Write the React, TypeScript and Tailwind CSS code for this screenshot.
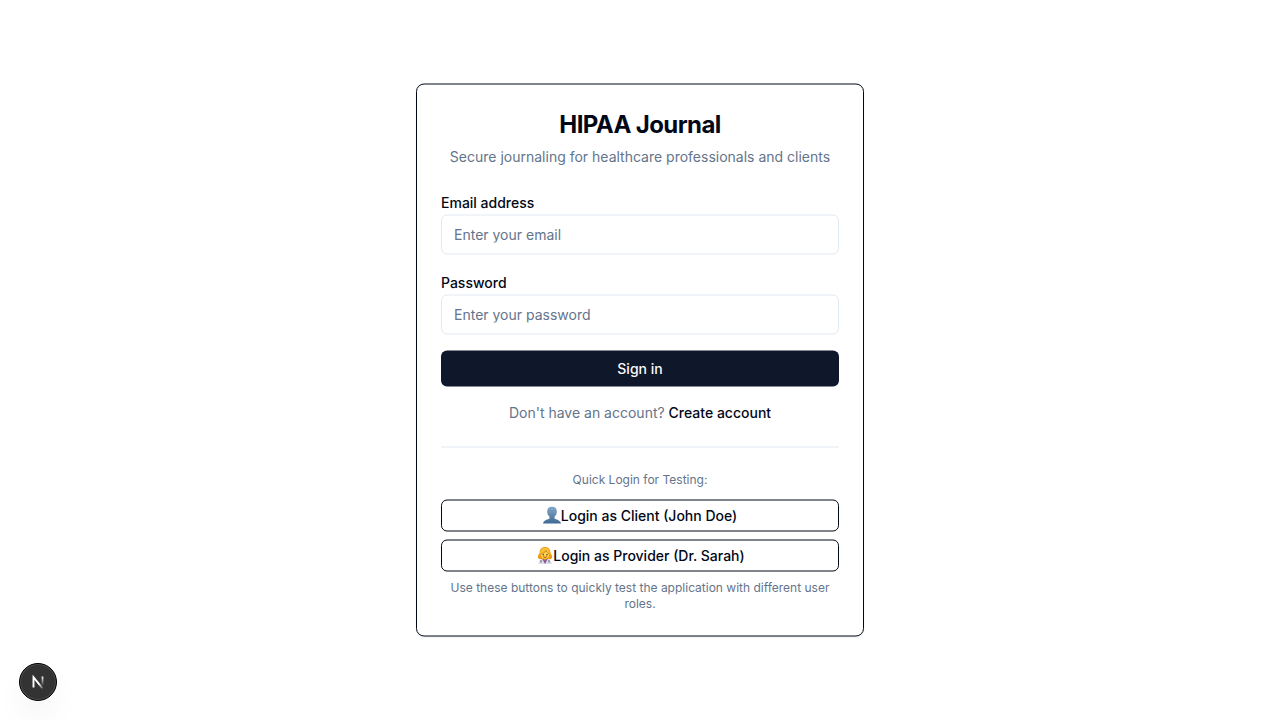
function PersonIcon() {
  return (
    <svg className="h-[18px] w-[18px] shrink-0" viewBox="0 0 18 18" aria-hidden="true">
      <defs>
        <linearGradient id="bust" x1="0" y1="0" x2="0" y2="1">
          <stop offset="0" stopColor="#86a9c8" />
          <stop offset="1" stopColor="#3e6a94" />
        </linearGradient>
      </defs>
      <path
        d="M9 0C6 0 4.200 2 4.200 5c0 2.300.9 4.200 2.300 5.200v1.500C6.300 12.900.6 13 0 17h18c-.6-4-6.300-4.100-6.500-5.300v-1.500c1.400-1 2.300-2.900 2.300-5.200 0-3-1.800-5-4.800-5z"
        fill="url(#bust)"
      />
    </svg>
  );
}

function DoctorIcon() {
  return (
    <svg className="h-[18px] w-[18px] shrink-0" viewBox="-1 0 18 18" aria-hidden="true">
      <path d="M9 .6C5.700.6 3.700 2.700 3.600 6 3.500 7.900 1.600 8.600 1.800 10.400c.2 1.900 1.900 2.600 3.800 2.400h6.800c1.900.2 3.600-.5 3.800-2.400.2-1.800-1.600-2.500-1.700-4.400C14.400 2.700 12.300.6 9 .6z" fill="#ee9d12" />
      <path d="M2.200 17.600c.1-2.900 1.600-4.500 4.200-4.900h5.200c2.600.4 4.100 2 4.200 4.900z" fill="#dcdfe9" />
      <path d="M6.300 12.600h5.400L9 17.600z" fill="#8c549b" />
      <path d="M7.400 10.500h3.200v2.300L9 14l-1.600-1.200z" fill="#d98d1c" />
      <ellipse cx="9" cy="8" rx="4.200" ry="4.200" fill="#ffd34e" />
      <path d="M4.200 7.800C6.300 7.300 8.900 6 10.100 3.900c.5 1.600 1.800 3 3.700 3.900C14.300 3.900 12.300 1.300 9 1.300S3.900 4 4.200 7.800z" fill="#f9bf35" />
      <path d="M4.700 7.500C6.900 6.900 9 5.800 10.100 3.900c.5 1.600 1.600 2.800 3.300 3.600" stroke="#b86f10" strokeWidth=".7" fill="none" />
      <circle cx="7.200" cy="8.300" r=".75" fill="#5e3610" />
      <circle cx="11" cy="8.300" r=".75" fill="#5e3610" />
      <path d="M7.300 10.200c1.100.8 2.400.8 3.500 0" stroke="#a23c22" strokeWidth="1" fill="none" />
      <path d="M5 13.600v2.400M13 13.600v2.400" stroke="#565b6d" strokeWidth="1" />
    </svg>
  );
}

function NextBadge() {
  return (
    <div className="fixed bottom-[19px] left-[19px] flex size-[38px] items-center justify-center rounded-full border border-black bg-[#333] shadow-[inset_0_0_0_1px_#4d4d4d,0_16px_32px_-8px_rgba(0,0,0,0.12)]">
      <svg width="14" height="14" viewBox="0 0 14 14" fill="none">
        <defs>
          <linearGradient id="diag" x1="8" y1="8.500" x2="12.500" y2="14.500" gradientUnits="userSpaceOnUse">
            <stop stopColor="#fff" />
            <stop offset="1" stopColor="#fff" stopOpacity="0" />
          </linearGradient>
          <linearGradient id="stem" x1="11" y1="1" x2="11" y2="11" gradientUnits="userSpaceOnUse">
            <stop stopColor="#fff" />
            <stop offset="1" stopColor="#fff" stopOpacity="0" />
          </linearGradient>
        </defs>
        <path d="M2.500 12.500V2.200L11.500 13.300" stroke="url(#diag)" strokeWidth="1.900" />
        <path d="M11.500 1.500V10" stroke="url(#stem)" strokeWidth="1.800" />
      </svg>
    </div>
  );
}

const labelClass = "block text-sm/6 font-medium";
const inputClass =
  "block h-10 w-full rounded-md border border-[#e2e8f0] bg-white px-3 py-2 text-sm placeholder:text-[#64748b]";
const outlineButton =
  "flex h-8 w-full items-center justify-center rounded-md border border-[#020817] bg-white px-3 text-sm font-medium";

export default function App() {
  return (
    <div className="flex min-h-screen items-center justify-center bg-white font-['Inter',sans-serif] text-[#020817] antialiased">
      <div className="w-full max-w-md -translate-y-[0.5px] rounded-lg border border-[#020817] bg-white shadow-[0_1px_2px_0_rgba(0,0,0,0.05)]">
        <div className="flex flex-col space-y-1.5 p-6 text-center">
          <h3 className="text-2xl font-bold tracking-tight">HIPAA Journal</h3>
          <p className="text-sm text-[#64748b]">Secure journaling for healthcare professionals and clients</p>
        </div>
        <div className="p-6 pt-0">
          <form className="space-y-4" onSubmit={(e) => e.preventDefault()}>
            <div>
              <label htmlFor="email" className={labelClass}>Email address</label>
              <input id="email" type="email" placeholder="Enter your email" className={inputClass} />
            </div>
            <div>
              <label htmlFor="password" className={labelClass}>Password</label>
              <input id="password" type="password" placeholder="Enter your password" className={inputClass} />
            </div>
            <button type="submit" className="flex h-9 w-full items-center justify-center rounded-md bg-[#0f172a] text-sm font-medium text-[#f8fafc]">
              Sign in
            </button>
            <p className="text-center text-sm text-[#64748b]">
              Don't have an account? <a href="#" className="font-medium text-[#020817]">Create account</a>
            </p>
          </form>
          <div className="mt-6 border-t border-[#e2e8f0] pt-6">
            <p className="mb-3 text-center text-xs text-[#64748b]">Quick Login for Testing:</p>
            <div className="space-y-2">
              <button type="button" className={outlineButton}><PersonIcon />Login as Client (John Doe)</button>
              <button type="button" className={outlineButton}><DoctorIcon />Login as Provider (Dr. Sarah)</button>
            </div>
            <p className="mt-2 text-center text-xs text-[#64748b]">
              Use these buttons to quickly test the application with different user roles.
            </p>
          </div>
        </div>
      </div>
      <NextBadge />
    </div>
  );
}
